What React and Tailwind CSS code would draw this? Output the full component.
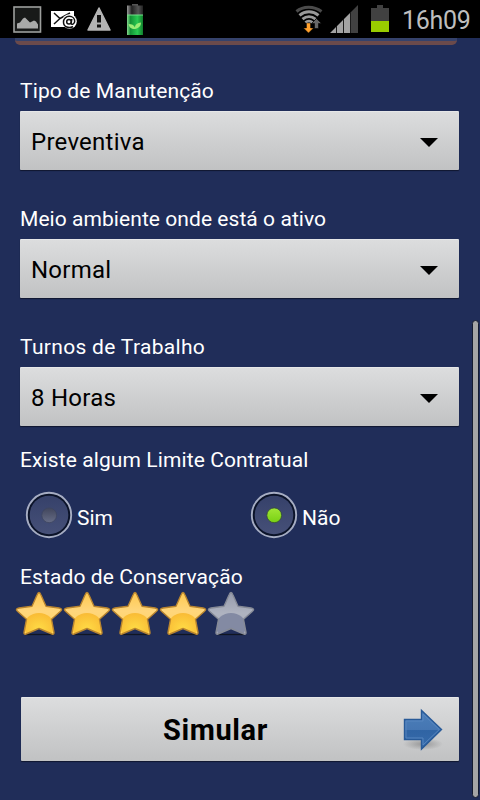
import React, { useState } from 'react';

const STAR = 'M24 2.500 Q25 2.500 26 5 L31 16.300 L44 18 Q48.300 18.900 45.500 21.300 L36.500 29.300 L39 42.500 Q39.200 44.800 37 44 L24 38.500 L11 44 Q8.800 44.800 9 42.500 L11.500 29.300 L2.500 21.300 Q-.3 18.900 4 18 L17 16.300 L22 5 Q23 2.500 24 2.500 Z';

const StatusBar = () => (
  <header className="flex h-[38px] shrink-0 items-center justify-between bg-black">
    <div className="flex h-full items-center">
      {/* Gallery */}
      <svg className="ml-[13px] h-[27px] w-[29px]" viewBox="0 0 29 27">
        <rect x="1" y="1" width="26.5" height="25" fill="#181a19" stroke="#9d9f9d" strokeWidth="1.6" />
        <path d="M4 22.500V17.500l3-1 3-4 2-1 5 5 4-2 2 1 2 3v4Z" fill="#a9aaa9" />
      </svg>
      {/* Mail */}
      <svg className="ml-[9px] h-[20px] w-[26px]" viewBox="0 0 26 20">
        <path d="M0 2h23v16H0Z" fill="#fff" />
        <path d="M3 4l6 5.500L19 4M3 15l6-5.500" fill="none" stroke="#111" strokeWidth="1.500" />
        <circle cx="18.500" cy="12.500" r="7.300" fill="#fff" />
        <circle cx="18" cy="12.800" r="2.300" fill="none" stroke="#111" strokeWidth="1.500" />
        <path d="M20.800 10l-.7 4.500c.4 1.600 3.600.8 3.600-2.200 0-2.900-2.300-5-5.400-5-3.300 0-5.800 2.500-5.800 5.700 0 5.200 5.500 6.800 9.500 4.500" fill="none" stroke="#111" strokeWidth="1.500" />
      </svg>
      {/* Warning */}
      <svg className="ml-[10px] h-[24px] w-[24px]" viewBox="0 0 24 24">
        <path d="M12 1 L23 23 H1 Z" fill="#b4b4b4" stroke="#b4b4b4" strokeWidth="1.500" strokeLinejoin="round" />
        <path d="M10 8h4v7.500h-4zM10 17.500h4v3h-4z" fill="#111" />
      </svg>
      {/* Battery saver */}
      <svg className="ml-[15px] h-[33px] w-[18px]" viewBox="0 0 18 33">
        <defs>
          <linearGradient id="saver">
            <stop offset="0" stopColor="#87d88d" />
            <stop offset=".22" stopColor="#139136" />
            <stop offset=".65" stopColor="#29c951" />
            <stop offset="1" stopColor="#117e2c" />
          </linearGradient>
          <linearGradient id="cap">
            <stop offset="0" stopColor="#999" />
            <stop offset=".3" stopColor="#222" />
            <stop offset=".7" stopColor="#555" />
            <stop offset="1" stopColor="#222" />
          </linearGradient>
        </defs>
        <path d="M6 1h6v2H6z" fill="#555" />
        <rect x="1" y="2.500" width="16" height="10" fill="url(#cap)" />
        <path d="M1 12h16v20H1z" fill="url(#saver)" />
        <path d="M1 12h16" stroke="#75df8a" />
        <path d="M2.500 21c3.500 0 5.500 1 6.500 3.500 0-3 2.500-4.500 6-5 0 4-3 6-6 6.500-4 0-6-2-6.500-5Z" fill="#9bed75" />
      </svg>
    </div>

    <div className="flex h-full items-center">
      {/* Wifi */}
      <svg className="h-[28px] w-[28px]" viewBox="0 0 28 28">
        <g fill="none" strokeWidth="3">
          <path d="M1.500 6.500C8 .8 19 .8 26.500 6.500" stroke="#4b4b4b" />
          <path d="M4.500 10.300c5.500-4.600 13.500-4.600 19 0" stroke="#999" />
          <path d="M7.500 14.200c4-3.300 9-3.300 13 0" stroke="#999" />
          <path d="M10.500 17.500c2-1.800 5-1.800 7 0" stroke="#999" />
        </g>
        <path d="M11.500 18h4v5h3l-5 5-5-5h3z" fill="#ffa02c" stroke="#000" strokeWidth=".4" />
        <path d="M19.500 23.500v-5h-3l5-5 5 5h-3v5z" fill="#686868" stroke="#000" strokeWidth=".6" />
      </svg>
      {/* Signal */}
      <svg className="ml-[7px] h-[28px] w-[29px]" viewBox="0 0 29 28">
        <path d="M0 28 6 22v6z M7 21l6-6v13H7z" fill="#a3a3a3" />
        <path d="M14 14l6-6v20h-6z" fill="#a3a3a3" />
        <path d="M21 7l7-7v28h-7z" fill="#414141" />
        <path d="M6.500 28V21M13.500 28V14M20.500 28V7" stroke="#1b1b1b" />
      </svg>
      {/* Battery */}
      <svg className="ml-[11px] h-[28px] w-[20px]" viewBox="0 0 20 28">
        <path d="M1 3h6V0h6v3h6v13H1z" fill="#414141" />
        <path d="M1 16h18v11H1z" fill="#99cc00" />
      </svg>
      <span className="ml-[12px] w-[78px] whitespace-nowrap pt-[3px] text-[25px] leading-[38px] tracking-[-0.3px] text-[#bebebe]">16h09</span>
    </div>
  </header>
);

const SelectField = ({ label, value, labelClass }) => (
  <div className="mb-[21px]">
    <div className={`h-[48px] pt-[15px] text-[21px] leading-[26px] text-white ${labelClass}`}>{label}</div>
    <button className="flex h-[59px] w-full items-center justify-between rounded-[1px] border-t border-[#e6e7e8] bg-linear-to-b from-[#dcddde] to-[#c1c2c3] pr-[21px] pl-[11px] text-[24px] text-black shadow-[0_1px_1px_#10172f]">
      <span className="pt-[2px] tracking-[0.25px]">{value}</span>
      <svg className="mt-[3px] h-[9px] w-[18px]" viewBox="0 0 18 9">
        <path d="M0 0h18L9 9z" fill="#000" />
      </svg>
    </button>
  </div>
);

const Radio = ({ label, checked, onSelect }) => (
  <button type="button" onClick={onSelect} className="flex w-[225px] shrink-0 items-center text-[21px] text-white">
    <svg className="h-[48px] w-[48px]" viewBox="0 0 48 48">
      <defs>
        <linearGradient id="radioFace" x2="0" y2="1">
          <stop offset="0" stopColor="#36416a" />
          <stop offset="1" stopColor="#465078" />
        </linearGradient>
        <linearGradient id="radioOff" x2="0" y2="1">
          <stop offset="0" stopColor="#41465c" />
          <stop offset="1" stopColor="#666c86" />
        </linearGradient>
        <linearGradient id="radioOn" x2="0" y2="1">
          <stop offset="0" stopColor="#a1e635" />
          <stop offset="1" stopColor="#78d013" />
        </linearGradient>
      </defs>
      <circle cx="24" cy="24" r="22.200" fill="#0b1329" stroke="#a6adc3" strokeWidth="1.900" />
      <circle cx="24" cy="24" r="19.300" fill="url(#radioFace)" />
      <circle cx="24.200" cy="24.300" r="7.400" fill={checked ? 'url(#radioOn)' : 'url(#radioOff)'} stroke={checked ? '#344b35' : '#3d455f'} strokeWidth=".8" />
    </svg>
    <span className="ml-[4px] pt-[7px]">{label}</span>
  </button>
);

const Star = ({ filled }) => (
  <svg className="h-[48px] w-[48px]" viewBox="0 0 48 48">
    <defs>
      <linearGradient id="gold" x2="0" y2="1">
        <stop offset="0" stopColor="#ffc94f" />
        <stop offset=".45" stopColor="#ffd67c" />
        <stop offset="1" stopColor="#ffd45a" />
      </linearGradient>
      <radialGradient id="goldLow" cx=".5" cy=".6" r=".6">
        <stop offset="0" stopColor="#ffdb45" />
        <stop offset="1" stopColor="#f9bb35" />
      </radialGradient>
      <linearGradient id="silver" x2="0" y2="1">
        <stop offset="0" stopColor="#969bab" />
        <stop offset=".5" stopColor="#afb3c0" />
        <stop offset="1" stopColor="#a3a8b7" />
      </linearGradient>
      <clipPath id="starClip">
        <path d={STAR} />
      </clipPath>
    </defs>
    <path d="M10 44.500h28" stroke="#101522" strokeWidth="1.300" />
    <path d={STAR} fill={filled ? 'url(#gold)' : 'url(#silver)'} />
    <g clipPath="url(#starClip)">
      <ellipse cx="24" cy="36" rx="15" ry="13" fill={filled ? 'url(#goldLow)' : '#838aa3'} />
    </g>
    <path d={STAR} fill="none" stroke={filled ? '#b8842f' : '#868a96'} strokeWidth="1.400" strokeLinejoin="round" />
  </svg>
);

const App = () => {
  const [hasLimit, setHasLimit] = useState(false);
  const [rating, setRating] = useState(4);

  return (
    <div className="flex h-[800px] w-[480px] flex-col overflow-hidden bg-[#202d59] font-[Roboto,sans-serif]">
      <StatusBar />

      <div className="flex flex-1">
        <main className="w-[472px]">
          {/* Bottom edge of the panel scrolled off above */}
          <div className="ml-[15px] h-[7px] w-[442px] rounded-b-[5px] border-b-[4px] border-[#6b4a4b] bg-[#35426b]" />

          <form className="ml-[20px] w-[439px] pt-[18px]" onSubmit={(e) => e.preventDefault()}>
            <SelectField label="Tipo de Manutenção" value="Preventiva" labelClass="tracking-[0.12px]" />
            <SelectField label="Meio ambiente onde está o ativo" value="Normal" labelClass="tracking-[0.06px]" />
            <SelectField label="Turnos de Trabalho" value="8 Horas" labelClass="tracking-[0.32px]" />

            <div className="text-[21px] leading-[26px] tracking-[0.1px] text-white">Existe algum Limite Contratual</div>
            <div className="mt-[18px] ml-[5px] flex">
              <Radio label="Sim" checked={hasLimit} onSelect={() => setHasLimit(true)} />
              <Radio label="Não" checked={!hasLimit} onSelect={() => setHasLimit(false)} />
            </div>

            <div className="mt-[25px] text-[21px] leading-[26px] tracking-[0.1px] text-white">Estado de Conservação</div>
            <div className="-ml-[5px] flex">
              {[1, 2, 3, 4, 5].map((n) => (
                <button key={n} type="button" onClick={() => setRating(n)}>
                  <Star filled={n <= rating} />
                </button>
              ))}
            </div>

            <button className="mt-[59px] ml-[1px] flex h-[64px] w-[438px] items-center rounded-[1px] border-t border-[#e6e7e8] bg-linear-to-b from-[#dcddde] to-[#c1c2c3] pr-[15px] text-black shadow-[0_1px_1px_#10172f]">
              <span className="flex-1 pt-[2px] pl-[8px] text-center text-[29px] font-bold tracking-[0.6px]">Simular</span>
              <svg className="h-[46px] w-[42px]" viewBox="0 0 42 46">
                <defs>
                  <linearGradient id="arrow" x2="0" y2="1">
                    <stop offset="0" stopColor="#4c7fba" />
                    <stop offset=".5" stopColor="#4576b2" />
                    <stop offset=".52" stopColor="#3064a4" />
                    <stop offset="1" stopColor="#376cab" />
                  </linearGradient>
                  <radialGradient id="arrowShadow">
                    <stop offset="0" stopColor="#777" stopOpacity=".6" />
                    <stop offset="1" stopColor="#777" stopOpacity="0" />
                  </radialGradient>
                </defs>
                <ellipse cx="21" cy="37" rx="20" ry="6" fill="url(#arrowShadow)" />
                <path d="M2.500 12.500h17V3.500L39.500 22.500l-20 19.500V32.500h-17Z" fill="url(#arrow)" stroke="#285a98" strokeWidth="1.400" />
                <path d="M4 31V14h17V7L37.300 22.500 21 38V31Z" fill="none" stroke="#5a89c2" strokeWidth=".9" />
              </svg>
            </button>
          </form>
        </main>

        {/* Scrollbar */}
        <div className="mt-[282px] mb-[2px] w-[7px] rounded-full border border-[#161c30] bg-[#a5a5a5]" />
      </div>
    </div>
  );
};

export default App;
